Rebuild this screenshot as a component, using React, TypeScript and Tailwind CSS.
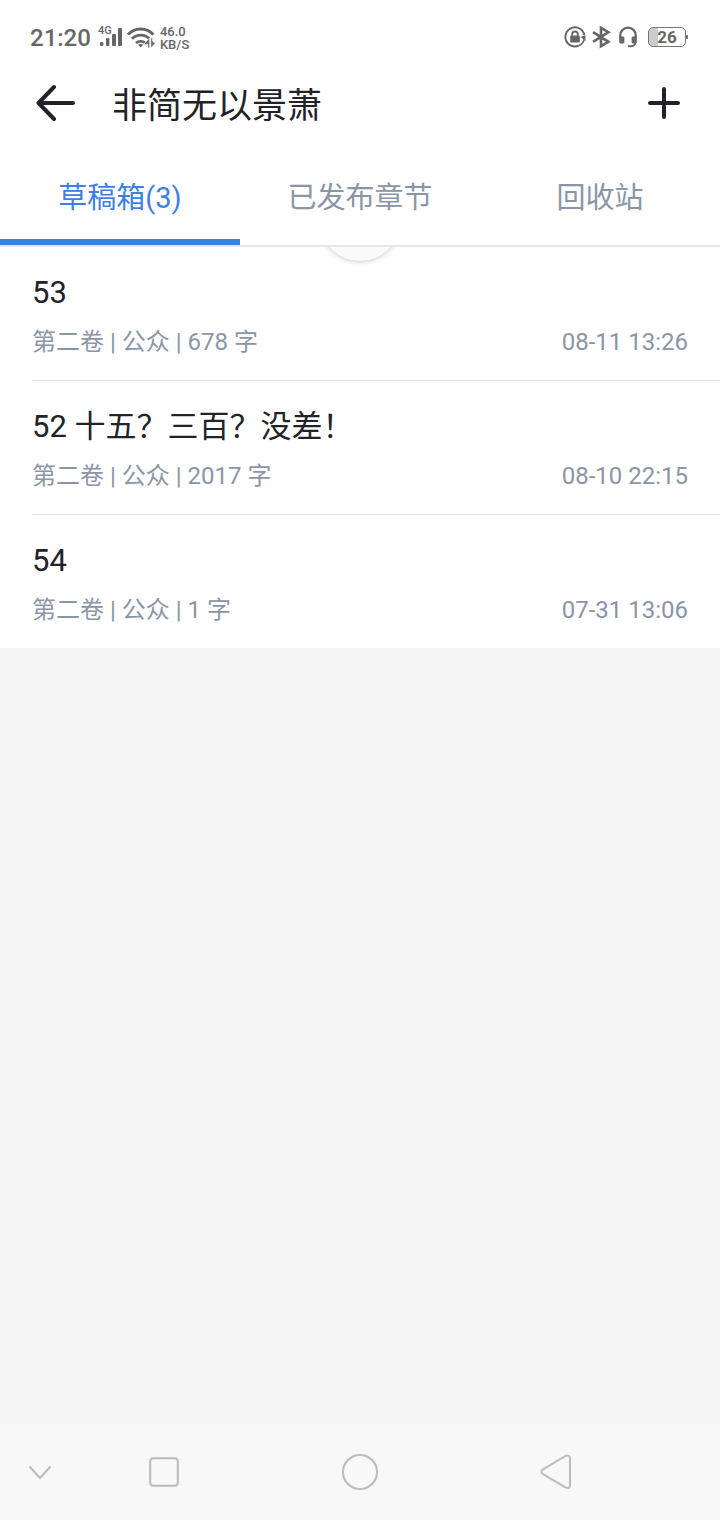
import { useState } from "react";

type Draft = {
  title: string;
  volume: string;
  access: string;
  words: number;
  time: string;
};

const drafts: Draft[] = [
  { title: "53", volume: "第二卷", access: "公众", words: 678, time: "08-11 13:26" },
  {
    title: "52 十五？三百？没差！",
    volume: "第二卷",
    access: "公众",
    words: 2017,
    time: "08-10 22:15",
  },
  { title: "54", volume: "第二卷", access: "公众", words: 1, time: "07-31 13:06" },
];

const tabs = ["草稿箱(3)", "已发布章节", "回收站"];

const StatusBar = () => {
  return (
    <div className="flex h-[72px] items-center pt-[2px] pr-8 pl-[30px] text-[#666]">
      <span className="pt-[2px] text-2xl leading-8 font-medium">21:20</span>
      <div className="relative ml-[7px] h-5 w-6">
        <span className="absolute -top-px left-0 text-[11px] leading-[10px] font-medium">4G</span>
        <svg className="h-5 w-6" viewBox="0 0 24 20" fill="currentColor">
          <rect x="2" y="15" width="3.4" height="4" rx="1" />
          <rect x="8" y="11" width="3.4" height="8" rx="1" />
          <rect x="14" y="7" width="4" height="12" rx="1" />
          <rect x="20" y="1" width="4" height="18" rx="1" />
        </svg>
      </div>
      <svg className="ml-[5px] h-[22px] w-7" viewBox="0 0 28 22" fill="none">
        <g stroke="currentColor" strokeWidth="2.8">
          <path d="M1 8.6A17.2 17.2 0 0 1 26.4 8.6" />
          <path d="M5 12.8A12 12 0 0 1 22.4 12.8" />
          <path d="M9 17A7 7 0 0 1 18.2 17" />
        </g>
        <path d="M11 18.8Q13.6 17 16.2 18.8L13.6 21.4Z" fill="currentColor" />
        <path
          d="M22.6 12V22H20.8V18.4H16.6ZM23.8 22V12L25.6 12V15.2L28 17.6Z"
          fill="currentColor"
          stroke="#fff"
          strokeWidth="0.6"
        />
      </svg>
      <div className="ml-[5px] pt-px text-[13px] leading-[13px] font-medium">
        <p>46.0</p>
        <p>KB/S</p>
      </div>

      <div className="ml-auto flex items-center">
        <svg className="h-[22px] w-[22px]" viewBox="0 0 22 22" fill="none">
          <path
            d="M14.6 19.8A9.6 9.6 0 1 1 20.4 9"
            stroke="currentColor"
            strokeWidth="2"
          />
          <path d="M16.6 11L21.4 9V15Z" fill="currentColor" />
          <path d="M20.4 13Q19 18 14.6 19.8" stroke="currentColor" strokeWidth="1.6" />
          <rect x="6.2" y="9.6" width="9.6" height="6.8" rx="1" fill="currentColor" />
          <path d="M8.2 10.5V8.3a2.8 2.8 0 0 1 5.6 0V10.5" stroke="currentColor" strokeWidth="1.8" />
        </svg>
        <svg className="ml-[5px] h-6 w-5" viewBox="0 0 20 24" fill="none">
          <path
            d="M2 7.2L17.4 16.8L10 21.2V2.8L17.4 7.2L2 16.8"
            stroke="currentColor"
            strokeWidth="2.6"
          />
        </svg>
        <svg className="ml-[7px] h-[22px] w-5" viewBox="0 0 20 22" fill="none">
          <path d="M2.3 13V9.3a7.7 7.7 0 0 1 15.4 0V13" stroke="currentColor" strokeWidth="2.2" />
          <rect x="1.2" y="10.5" width="5.2" height="7" rx="1.4" fill="currentColor" />
          <rect x="13.6" y="10.5" width="5.2" height="7" rx="1.4" fill="currentColor" />
          <path d="M17.4 16Q17.2 20 13 20.3H10" stroke="currentColor" strokeWidth="2" />
        </svg>
        <div className="ml-[10px] flex items-center">
          <div className="flex h-5 w-[38px] items-center justify-center rounded-[5px] border border-[#777] bg-linear-to-r from-[#ccc] from-25% to-white to-25% text-[17px] leading-5 font-bold">
            26
          </div>
          <div className="h-1 w-[2px] bg-[#777]" />
        </div>
      </div>
    </div>
  );
};

const DraftRow = ({ data, last }: { data: Draft; last: boolean }) => {
  return (
    <li
      className={`ml-8 pt-[26px] pr-8 pb-[22px] ${
        last ? "" : "border-b border-[#e5e5e5]"
      }`}
    >
      <h2 className="text-[31px] leading-10 text-[#212328]">{data.title}</h2>
      <div className="mt-[13px] flex justify-between text-2xl text-[#8a95a8]">
        <p>
          {data.volume} | {data.access} | {data.words} 字
        </p>
        <time>{data.time}</time>
      </div>
    </li>
  );
};

const NavBar = () => {
  return (
    <nav className="grid h-24 grid-cols-[66px_1fr_1fr_1fr_66px] items-center bg-[#f8f8f8] text-[#bbb]">
      <button aria-label="收起" className="pl-7">
        <svg className="h-6 w-6" viewBox="0 0 24 24" fill="none" stroke="currentColor" strokeWidth="2">
          <path d="M1.5 6.5L12 18L22.5 6.5" />
        </svg>
      </button>
      <button aria-label="最近任务" className="flex justify-center">
        <svg className="h-8 w-8" viewBox="0 0 32 32" fill="none" stroke="currentColor" strokeWidth="2">
          <rect x="2.2" y="2.2" width="27.6" height="27.6" rx="3" />
        </svg>
      </button>
      <button aria-label="主页" className="flex justify-center">
        <svg className="h-9 w-9" viewBox="0 0 36 36" fill="none" stroke="currentColor" strokeWidth="2">
          <circle cx="18" cy="18" r="17" />
        </svg>
      </button>
      <button aria-label="返回" className="flex justify-center">
        <svg
          className="h-9 w-8"
          viewBox="0 0 32 36"
          fill="none"
          stroke="currentColor"
          strokeWidth="2"
          strokeLinejoin="round"
        >
          <path d="M2.6 15.6L25.4 2Q30 0.2 30 4.6V30.8Q30 35.6 25.4 33.4L2.6 19.8Q0.2 17.7 2.6 15.6Z" />
        </svg>
      </button>
    </nav>
  );
};

const App = () => {
  const [active, setActive] = useState(0);

  return (
    <div className="flex min-h-screen flex-col bg-[#f5f5f5] font-[Roboto,'Noto_Sans_CJK_SC',sans-serif]">
      <div className="bg-white">
        <StatusBar />
        <header className="flex h-16 items-center px-9">
          <button aria-label="返回上一页">
            <svg
              className="h-10 w-10"
              viewBox="0 0 40 40"
              fill="none"
              stroke="#212328"
              strokeWidth="4"
              strokeLinecap="round"
              strokeLinejoin="round"
            >
              <path d="M18 3L2.5 19L18 35M2.5 19H37" />
            </svg>
          </button>
          <h1 className="ml-9 pt-[6px] text-[35px] leading-[48px] text-[#212328]">
            非简无以景萧
          </h1>
          <button aria-label="新建章节" className="ml-auto">
            <svg
              className="h-10 w-10"
              viewBox="0 0 40 40"
              stroke="#212328"
              strokeWidth="4"
              strokeLinecap="round"
            >
              <path d="M20 5V33M6 19H34" />
            </svg>
          </button>
        </header>
        <div role="tablist" className="grid grid-cols-3 border-b-2 border-[#e6e7e9]">
          {tabs.map((tab, key) => (
            <button
              key={key}
              role="tab"
              aria-selected={active === key}
              onClick={() => setActive(key)}
              className={`border-b-6 pt-[42px] pb-[21px] text-[29px] leading-10 ${
                active === key
                  ? "border-[#3f7fdf] text-[#3f7fdf]"
                  : "border-transparent text-[#8a95a8]"
              }`}
            >
              {tab}
            </button>
          ))}
        </div>
      </div>
      <main className="relative flex-1 overflow-hidden">
        <ul className="bg-white">
          {drafts.map((draft, key) => (
            <DraftRow key={key} data={draft} last={key === drafts.length - 1} />
          ))}
        </ul>
        {/* pull-to-refresh disc, tucked under the tabs */}
        <div className="absolute -top-[66px] left-1/2 h-20 w-20 -translate-x-1/2 rounded-full bg-[#fafafa] shadow-[0_1px_5px_rgba(0,0,0,0.2)]" />
      </main>
      <NavBar />
    </div>
  );
};

export default App;
